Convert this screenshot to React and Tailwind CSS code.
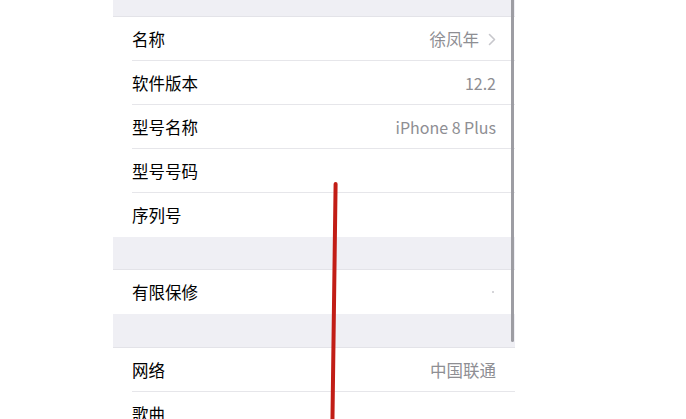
import React from 'react';

const groups = [
  {
    gapTop: 'h-[17px]',
    rows: [
      { label: '名称', value: '徐凤年', chevron: true },
      { label: '软件版本', value: '12.2', latin: true },
      { label: '型号名称', value: 'iPhone 8 Plus', latin: true },
      { label: '型号号码', value: '' },
      { label: '序列号', value: '' },
    ],
  },
  {
    gapTop: 'h-[33px]',
    rows: [{ label: '有限保修', value: '', dot: true }],
  },
  {
    gapTop: 'h-[34px]',
    rows: [
      { label: '网络', value: '中国联通' },
      { label: '歌曲', value: '' },
    ],
  },
];

function Row({ row, last }) {
  return (
    <div className="relative flex h-[44px] items-center pl-[19px] pr-[19px] bg-white">
      <span className="text-[16.5px] text-black">{row.label}</span>
      <div className="ml-auto flex items-center gap-[9px] text-[#8e8e93]">
        {row.value && <span className={row.latin ? 'text-[16px]' : 'text-[16.5px]'}>{row.value}</span>}
        {row.chevron && (
          <svg width="8" height="13" viewBox="0 0 8 13" fill="none">
            <path d="M1.5 1.5 L6.5 6.5 L1.5 11.5" stroke="#c7c7cc" strokeWidth="1.6" strokeLinecap="round" strokeLinejoin="round" />
          </svg>
        )}
        {row.dot && <span className="mr-[2px] h-[2px] w-[2px] rounded-full bg-[#c7c7cc]" />}
      </div>
      {!last && <div className="absolute bottom-0 left-[19px] right-0 h-px bg-[#e6e6ea]" />}
    </div>
  );
}

export default function App() {
  return (
    <div
      className="relative h-[419px] w-[686px] overflow-hidden bg-white"
      style={{ fontFamily: '"Noto Sans CJK SC", "Noto Sans", sans-serif' }}
    >
      <div className="relative ml-[113px] w-[402px]">
        {groups.map((g, gi) => (
          <div key={gi}>
            <div className={`${g.gapTop} bg-[#efeff4] border-b border-[#e3e3e8]`} />
            {g.rows.map((row, ri) => (
              <Row key={ri} row={row} last={ri === g.rows.length - 1 && gi !== groups.length - 1} />
            ))}
          </div>
        ))}

        {/* scroll indicator */}
        <div className="absolute left-[398px] top-0 h-[342px] w-[3px] rounded-b-full bg-[#9d9da3]" />
      </div>

      {/* red stroke drawn over the screenshot */}
      <svg className="absolute left-0 top-0" width="686" height="419" viewBox="0 0 686 419">
        <path d="M335.6 184 L332.4 425" stroke="#c21d16" strokeWidth="4" strokeLinecap="round" />
      </svg>
    </div>
  );
}
